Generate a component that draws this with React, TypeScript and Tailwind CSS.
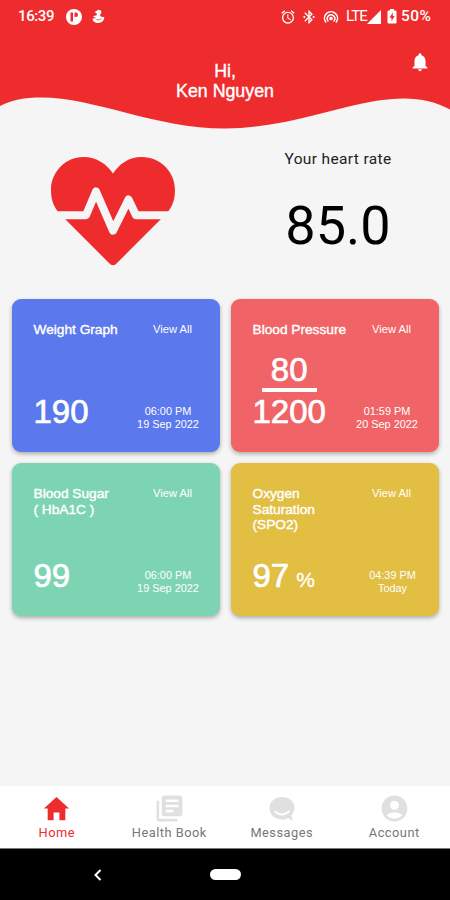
import React from "react";
import { IoMdHome } from "react-icons/io";
import { MdAccountCircle, MdAlarm, MdBluetoothConnected, MdLibraryBooks, MdNotifications } from "react-icons/md";

function HotspotIcon() {
  return (
    <svg className="ml-[6px] h-[14px] w-[16px]" viewBox="0 0 16 14" fill="none" stroke="#fff" strokeWidth="1.500" strokeLinecap="round">
      <path d="M2.700 12A6.500 6.500 0 1 1 13.300 12" />
      <path d="M5 11A3.800 3.800 0 1 1 11 11" />
      <circle cx="8" cy="8.500" r="1.100" fill="#fff" />
    </svg>
  );
}

function StatusBar() {
  return (
    <div className="flex h-8 items-center pt-px pl-[18px] pr-[17px] font-[Roboto,sans-serif] text-[15px] font-medium">
      <span className="w-[48px] tracking-[-0.4px]">16:39</span>
      <svg className="h-4 w-4" viewBox="0 0 16 16">
        <circle cx="8" cy="8" r="8" fill="#fff" />
        <path d="M4.500 3.500v9H7v-9zM8.500 3.500h1.200q2.300 0 2.300 2.300T9.700 8.100H8.500z" fill="#ee2c2d" />
      </svg>
      <svg className="ml-[10px] h-[15px] w-[13px]" viewBox="0 0 13 15" fill="#fff">
        <path d="M5 1.500C6.500-.2 9.700.7 9.300 3.400 9.100 4.800 7.600 5.600 8.200 7c.4 1 2.600.5 4.100 1.300-.1 3.400-2.800 5.700-6 5.700C2.600 14 .4 11.700.7 9.600L4 9.200 1 7.300 4.700 6.300C5.200 5.200 4.300 4.700 4.500 4L2.500 3.200z" />
        <path d="M4.500 10.500Q7.500 12 9.500 9.300" fill="none" stroke="#ee2c2d" strokeWidth="0.800" />
      </svg>
      <div className="ml-auto flex items-center">
        <MdAlarm className="h-[16px] w-[16px]" />
        <MdBluetoothConnected className="ml-[5px] h-[16px] w-[16px]" />
        <HotspotIcon />
        <span className="ml-[7px] w-[21px] text-[15px] font-normal tracking-[-0.9px]">LTE</span>
        <svg className="h-[14px] w-[14px]" viewBox="0 0 14 14"><path d="M14 0v14H0z" fill="#fff" /></svg>
        <svg className="ml-[6px] h-[15px] w-[10px]" viewBox="0 0 10 15">
          <path d="M3 0h4v1.500h1.500Q9.500 1.500 9.500 2.500v11q0 1-1 1h-7q-1 0-1-1v-11q0-1 1-1H3z" fill="#fff" />
          <path d="M5.800 3.500 2.500 8.800h2v3.500l3.200-5.200H5.800z" fill="#ee2c2d" />
        </svg>
        <span className="ml-[4px] w-[32px] text-[15.500px] tracking-[0.4px]">50%</span>
      </div>
    </div>
  );
}

function Header() {
  return (
    <header className="relative h-[132px] text-white">
      <svg className="absolute inset-0 h-[132px] w-[450px]" viewBox="0 0 450 132">
        <path d="M0 0H450V109.500C430 98 405 96 375 101C330 109 280 128.500 225 128.500C155 128.500 95 97.500 41 97.500C25 97.500 11 100 0 106z" fill="#ee2c2d" />
      </svg>
      <div className="relative">
        <StatusBar />
        <div className="flex h-0 justify-end pr-[19px] pt-[19px]">
          <MdNotifications className="h-[22px] w-[22px] shrink-0" />
        </div>
        <h1 className="mt-[10px] text-center text-[17.8px] leading-[20px] font-normal [-webkit-text-stroke:0.4px_white]">
          Hi,<br />Ken Nguyen
        </h1>
      </div>
    </header>
  );
}

function HeartRate() {
  return (
    <section className="flex h-[167px] pl-[50px]">
      <svg className="mt-[24px] h-[112px] w-[126px]" viewBox="50 156 126 112">
        <path d="M113 173.500C119 164.500 128 157 142 157C160 157 175 171.500 175 190C175 202 171 209 165 215L117 263Q113 267.500 109 263L61 215C55 209 51 202 51 190C51 171.500 66 157 83 157C97 157 107 164.500 113 173.500z" fill="#ee2c2d" />
        <path d="M50 215.300H86L96 191.500L113 230.700L128.500 199.500L136 215.300H176" fill="none" stroke="#f5f5f5" strokeWidth="8" strokeLinejoin="round" />
      </svg>
      <div className="ml-auto mr-[48px] flex w-[128px] flex-col items-center font-[Roboto,sans-serif]">
        <p className="mt-[16px] text-[15.500px] leading-[22px] tracking-[0.35px] whitespace-nowrap text-[#222]">Your heart rate</p>
        <p className="mt-[24px] text-[54px] leading-[64px] text-black">85.0</p>
      </div>
    </section>
  );
}

type CardProps = {
  color: string;
  title: React.ReactNode;
  time: string;
  day: string;
  stampWidth?: string;
  children: React.ReactNode;
};

function Card({ color, title, time, day, stampWidth = "w-[76px]", children }: CardProps) {
  return (
    <article className={`flex h-[153px] flex-col justify-between rounded-[9px] pl-[21.500px] pr-[14px] pt-[23px] pb-[22px] text-white shadow-[0_2px_4px_rgba(0,0,0,0.3)] ${color}`}>
      <div className="flex h-0 justify-between">
        <h2 className="text-[13.7px] leading-[15.500px] font-normal whitespace-nowrap [-webkit-text-stroke:0.4px_white]">{title}</h2>
        <span className="mr-[14px] text-[11.2px] leading-[15px] whitespace-nowrap">View All</span>
      </div>
      <div className="flex items-end justify-between">
        <div className="text-[33px] leading-[37px] [-webkit-text-stroke:0.7px_white]">{children}</div>
        <p className={`${stampWidth} text-center text-[10.9px] leading-[12.500px] whitespace-nowrap`}>{time}<br />{day}</p>
      </div>
    </article>
  );
}

function ChatIcon() {
  return (
    <svg className="h-[26px] w-[26px]" viewBox="0 0 26 26">
      <path d="M13 1C5.800 1 .5 5.700.5 12S5.500 23.500 13 23.500c2.200 0 4.200-.5 6-1.500l4.500 3-1-6c1.700-2 3-4.200 3-7C25.500 5.700 20.200 1 13 1z" fill="#e0e0e0" />
      <path d="M6 15.500Q13 21.500 20 15.500" fill="none" stroke="#fff" strokeWidth="1.800" strokeLinecap="round" />
    </svg>
  );
}

function Tab({ icon, label, active = false }: { icon: React.ReactNode; label: string; active?: boolean }) {
  return (
    <div className={`flex w-1/4 flex-col items-center pt-[8px] pl-px ${active ? "text-[#ee2c2d]" : "text-[#e0e0e0]"}`}>
      <div className="flex h-[29px] items-center">{icon}</div>
      <span className={`mt-px text-[12.8px] leading-[18px] tracking-[0.5px] whitespace-nowrap ${active ? "" : "text-[#777]"}`}>{label}</span>
    </div>
  );
}

export default function App() {
  return (
    <div className="flex h-[900px] w-[450px] flex-col overflow-hidden bg-[#f5f5f5] font-['Liberation_Sans',sans-serif]">
      <Header />
      <HeartRate />
      <main className="grid grid-cols-2 gap-x-[11px] gap-y-[11px] pl-[12px] pr-[11px]">
        <Card color="bg-[#5b78ed]" title="Weight Graph" time="06:00 PM" day="19 Sep 2022">190</Card>
        <Card color="bg-[#f06467]" title="Blood Pressure" time="01:59 PM" day="20 Sep 2022">
          <div className="flex flex-col items-center">
            <span>80</span>
            <span className="mb-px h-[4px] w-[55px] bg-white" />
            <span>1200</span>
          </div>
        </Card>
        <Card color="bg-[#7dd4b3]" title={<>Blood Sugar<br />( HbA1C )</>} time="06:00 PM" day="19 Sep 2022">99</Card>
        <Card color="bg-[#e2be43]" title={<>Oxygen<br />Saturation<br />(SPO2)</>} time="04:39 PM" day="Today" stampWidth="w-[65px]">
          97<span className="ml-[7px] text-[21px] leading-none [-webkit-text-stroke:0.3px_white]">%</span>
        </Card>
      </main>
      <nav className="mt-auto flex h-[62px] shrink-0 bg-white font-[Roboto,sans-serif]">
        <Tab active label="Home" icon={<IoMdHome className="h-[31px] w-[31px]" />} />
        <Tab label="Health Book" icon={<MdLibraryBooks className="h-[31px] w-[31px]" />} />
        <Tab label="Messages" icon={<ChatIcon />} />
        <Tab label="Account" icon={<MdAccountCircle className="h-[31px] w-[31px]" />} />
      </nav>
      <footer className="flex h-[52px] shrink-0 items-center border-t border-[#777] bg-black pl-[93px]">
        <svg className="h-[12px] w-[9px]" viewBox="0 0 9 12"><path d="M7.500 1 2.500 6l5 5" fill="none" stroke="#fff" strokeWidth="2" /></svg>
        <span className="ml-[108px] h-[11px] w-[31px] rounded-full bg-white" />
      </footer>
    </div>
  );
}
